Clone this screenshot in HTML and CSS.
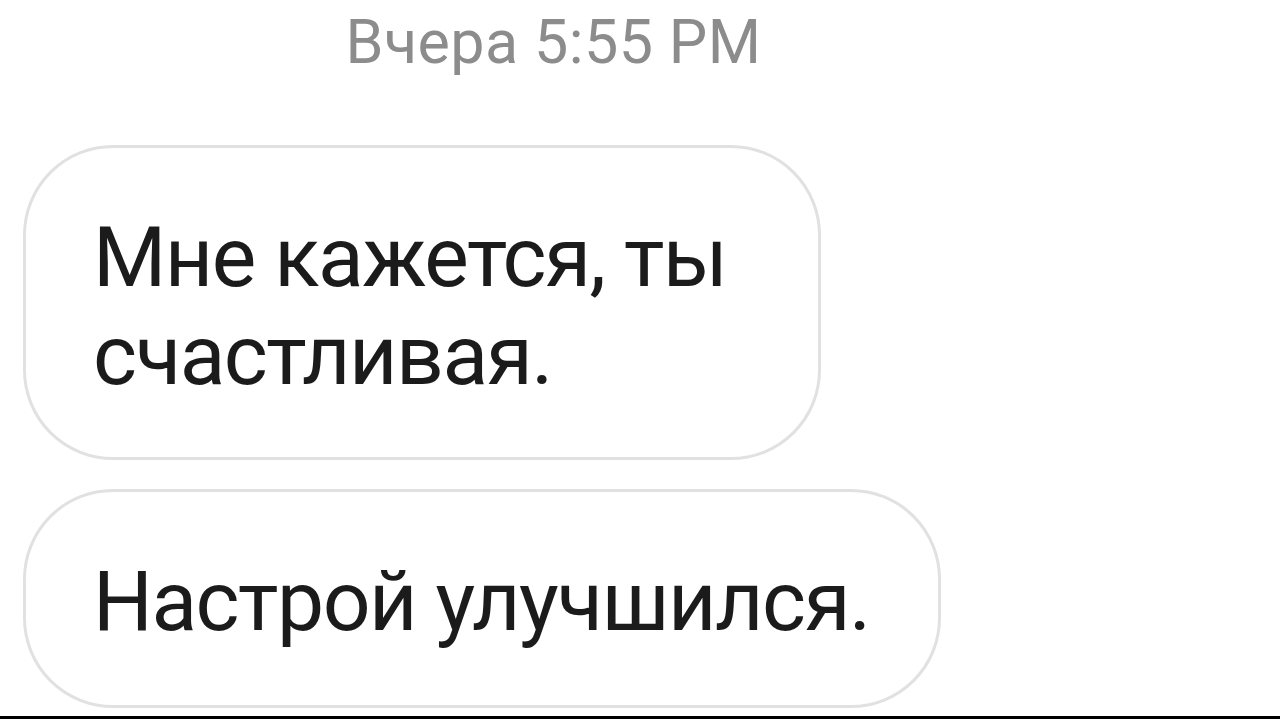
FILE: index.html
```html
<!DOCTYPE html>
<html lang="ru">
<head>
  <meta charset="UTF-8" />
  <title>Сообщения</title>
  <link rel="stylesheet" href="styles.css">
</head>
<body>
  <div class="chat">
    <div class="stamp">Вчера 5:55 PM</div>

    <!-- incoming messages -->
    <div class="thread">
      <div class="bubble bubble-wide">Мне кажется, ты счастливая.</div>
      <div class="bubble bubble-last">Настрой улучшился.</div>
    </div>
  </div>
  <div class="bottom-bar"></div>
</body>
</html>
```

FILE: styles.css
```css
html, body {
  margin: 0;
  height: 100%;
}
body {
  background: #fff;
  font-family: Roboto, "Liberation Sans", sans-serif;
  color: #1b1b1b;
  display: flex;
  flex-direction: column;
  overflow: hidden;
}
.chat {
  flex: 1;
}
.stamp {
  width: 1107px;
  margin-top: 6px;
  text-align: center;
  font-size: 61px;
  line-height: 72px;
  letter-spacing: 0.4px;
  color: #8c8c8c;
}
.thread {
  display: flex;
  flex-direction: column;
  align-items: flex-start;
  gap: 29px;
  padding-left: 23px;
  margin-top: 67px;
}
.bubble {
  box-sizing: border-box;
  padding: 61px 68px 52px 67px;
  border: 3px solid #e1e1e1;
  border-radius: 90px;
  font-size: 84px;
  line-height: 98px;
  letter-spacing: -1.5px;
}
.bubble-wide {
  width: 798px;
}
.bubble-last {
  padding-bottom: 54px;
}
.bottom-bar {
  height: 3px;
  background: #000;
}
```
